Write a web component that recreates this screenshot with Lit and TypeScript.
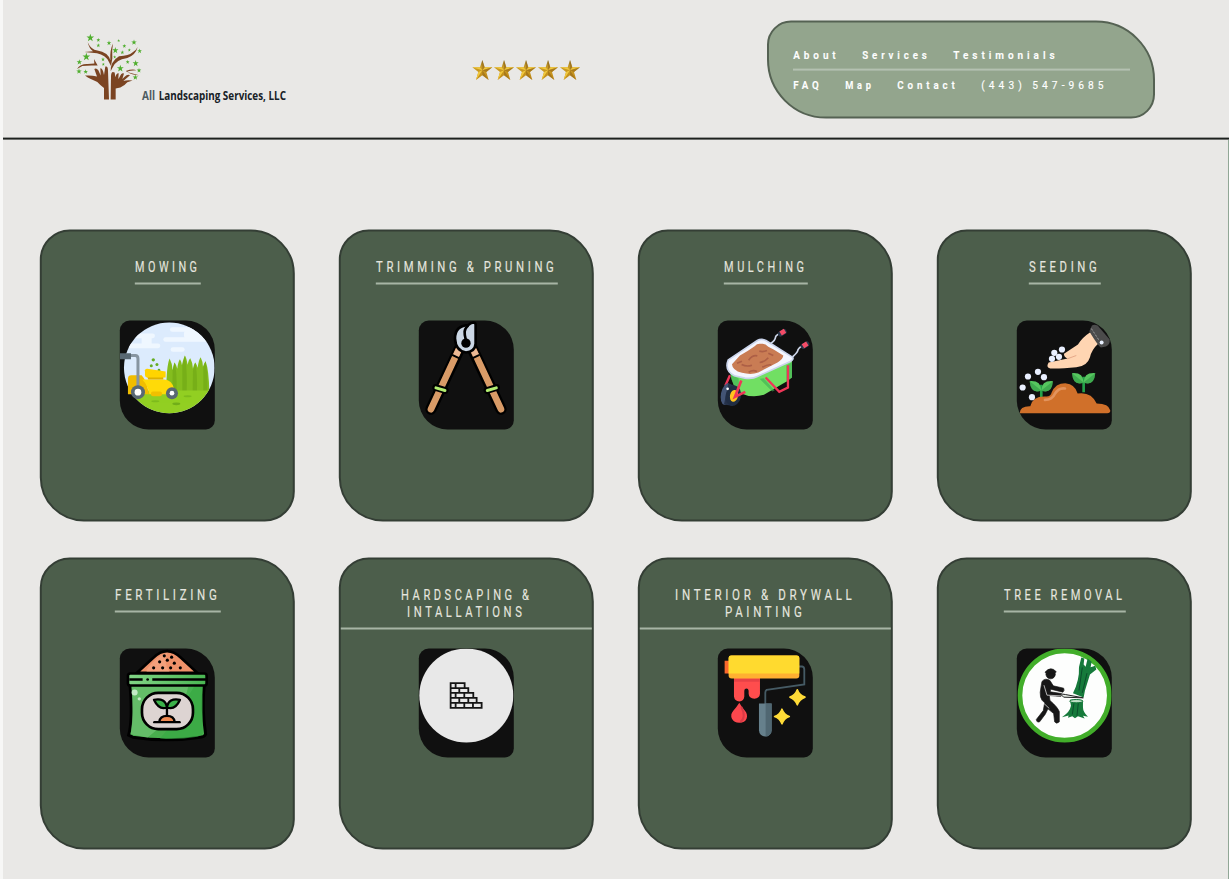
import { LitElement, html, svg, css } from "lit";
import { customElement, property } from "lit/decorators.js";

const STAR = "0,-31 7,-9 30,-9 12,5 19,29 0,15 -19,29 -12,5 -30,-9 -7,-9";

/** Letter-spaced condensed caption stretched to an exact width. */
@customElement("fit-text")
class FitText extends LitElement {
  static properties = { text: {}, width: { type: Number }, size: { type: Number }, spacing: { type: Number }, line: { type: Number } };
  text = "";
  width = 60;
  size = 15;
  spacing = 4.8;
  line = 17;
  static styles = css`
    :host { display: block; }
    svg { display: block; overflow: visible; }
    text { fill: currentColor; stroke: currentColor; stroke-width: 0.15px; font-family: Roboto, "Open Sans", sans-serif; }
  `;
  render() {
    return html`<svg width=${this.width} height=${this.line}>
      <text x="0.3" y=${this.line - 4} font-size=${this.size} letter-spacing=${this.spacing}
        textLength=${this.width - 0.7} lengthAdjust="spacingAndGlyphs">${this.text}</text></svg>`;
  }
}

const mower = svg`<svg viewBox="45 31 284 327">
  <defs><clipPath id="c"><circle cx="193" cy="173" r="136"/></clipPath></defs>
  <g clip-path="url(#c)">
    <rect x="45" y="31" width="290" height="290" fill="#dcebfd"/>
    <g fill="#eff7ff"><rect x="195" y="51" width="75" height="14" rx="7"/><rect x="237" y="62" width="60" height="22" rx="8"/><rect x="175" y="81" width="155" height="14" rx="7"/><rect x="70" y="70" width="80" height="14" rx="7"/><rect x="110" y="80" width="30" height="22"/><rect x="60" y="100" width="106" height="14" rx="7"/><rect x="197" y="111" width="42" height="14" rx="7"/></g>
    <path fill="#84bd1e" d="M184 245Q184 168 194 145Q202 160 203 180Q206 162 209 157Q215 165 217 176Q219 155 225 147Q230 155 231 165Q235 145 240 136Q246 146 248 164Q251 148 256 144Q263 156 264 176Q267 161 271 157Q276 164 278 173Q281 149 287 141Q294 154 294 170Q298 156 302 153Q312 180 313 245Z"/>
    <path fill="#73ab17" d="M203 180Q208 160 209 157Q216 180 215 245H202ZM232 165L240 136Q248 190 245 245H232ZM264 180L271 157Q278 190 276 245H263ZM295 170L302 153Q309 190 307 245H295Z" opacity=".75"/>
    <rect x="45" y="241" width="290" height="80" fill="#92cf22"/>
    <g fill="#71ae19"><ellipse cx="214" cy="281" rx="12" ry="4"/><g opacity=".6"><ellipse cx="151" cy="273" rx="12" ry="3"/><ellipse cx="248" cy="258" rx="12" ry="3"/></g></g>
  </g>
  <g fill="#66ad22"><circle cx="145" cy="149" r="5"/><circle cx="156" cy="163" r="4.5"/><circle cx="139" cy="167" r="4.5"/><circle cx="162" cy="180" r="4"/></g>
  <path fill="#f1bd00" d="M69 252V205Q69 195 79 195H110Q125 210 132 252Z"/>
  <path fill="#ffda08" d="M112 208H178Q201 210 207 235V252H133Q129 226 112 208Z"/>
  <path fill="#ddb000" d="M126 198H175V208H130Z"/><path fill="#ffd400" d="M120 180Q121 176 127 176L182 184V202H127Q120 202 120 193Z"/><rect x="138" y="244" width="33" height="14" rx="6" fill="#f0c000"/>
  <path d="M73 136H91Q99 136 99 146V230" fill="none" stroke="#8795a1" stroke-width="9"/><path fill="#596873" d="M45 129H78V147H45Z"/>
  <circle cx="99" cy="246" r="21" fill="#596873"/><circle cx="99" cy="246" r="10" fill="#fff"/><circle cx="201" cy="249" r="18" fill="#596873"/><circle cx="201" cy="249" r="7" fill="#fff"/></svg>`;

const shears = svg`<svg viewBox="42 31 284 327">
  <g stroke-linecap="round" fill="none"><path d="M164 115L78 297M202 115L288 297" stroke="#000" stroke-width="34"/><path d="M162 117L78 297M204 117L288 297" stroke="#d99b67" stroke-width="20"/><path d="M162 117L153 137M204 117L214 137" stroke="#edb994" stroke-width="18" stroke-linecap="butt"/>
  <path d="M143 135L162 144M203 144L222 135" stroke="#000" stroke-width="6"/><path d="M92 232L121 241M275 232L246 241" stroke="#000" stroke-width="20"/><path d="M93 233L120 241M274 233L247 241" stroke="#b2ed70" stroke-width="9"/></g>
  <path d="M189 45Q150 47 150 85Q152 122 183 127Q210 124 212 101V44Q212 37 205 37Q197 38 189 45Z" fill="#cbd7e5" stroke="#000" stroke-width="8"/><path d="M190 45C176 57 177 70 183 91" fill="none" stroke="#000" stroke-width="8"/><circle cx="183" cy="99" r="14"/></svg>`;

const barrow = svg`<svg viewBox="40 31 284 327">
  <g fill="none" stroke-linecap="round"><path d="M199 99Q211 92 213 80Q215 74 231 68M265 139Q280 126 280 119Q283 111 298 106" stroke="#cdd5e8" stroke-width="5"/><path d="M228 71L238 65M296 108L306 102" stroke="#29364a" stroke-width="16"/><path d="M228 70L241 62M295 108L308 100" stroke="#f34c67" stroke-width="14" stroke-linecap="butt"/></g>
  <path fill="#71df63" d="M77 189Q84 232 107 249Q140 264 178 254L247 213L262 202V143Z"/><path fill="#3cae53" d="M77 193L102 205L104 245Q84 229 77 193ZM177 204L210 241L203 244L165 206ZM245 167L262 156V202L245 213Z" opacity=".6"/>
  <path d="M71 149L158 91Q170 84 184 91L262 140Q270 146 257 154L158 199Q145 207 121 204L89 197Q58 180 71 149Z" fill="#f4f6ff" stroke="#cbd5ec" stroke-width="5"/>
  <path fill="#c97c54" d="M82 162L106 136Q129 123 150 108Q158 99 169 101Q181 98 191 110L207 118L236 136Q235 147 220 156L161 187Q140 195 112 188Q83 180 82 162Z"/>
  <path d="M132 150Q143 134 158 137M164 123Q176 126 187 121M111 163Q126 171 142 165M165 157Q181 155 191 143M191 129L206 136M132 186Q145 178 157 184M173 171Q189 162 200 164M97 159L112 153" fill="none" stroke="#ad5f46" stroke-width="5"/>
  <path d="M76 195L62 227M183 202L224 245L250 232V165" fill="none" stroke="#ef3658" stroke-width="7"/>
  <ellipse cx="66" cy="252" rx="17" ry="33" transform="rotate(12 66 252)" fill="#435475"/><path d="M71 220L96 228L82 287L58 283Z" fill="#26324a"/><ellipse cx="86" cy="257" rx="23" ry="31" transform="rotate(12 86 257)" fill="#202d43"/><ellipse cx="88" cy="257" rx="12" ry="18" transform="rotate(12 88 257)" fill="#ffc31d"/><circle cx="69" cy="236" r="4" fill="#fff"/>
  <path d="M110 211L91 260L122 245" fill="none" stroke="#ef3658" stroke-width="8"/></svg>`;

const sprout = (x: number, y: number) => svg`<g transform="translate(${x} ${y})"><path d="M0 5V51" stroke="#24a34a" stroke-width="8"/><path fill="#56c65f" d="M0 22Q-31 34 -35-6Q-1-9 0 22Q1-9 35-6Q31 34 0 22Z"/><path fill="#27903f" d="M0 22Q-31 34 -35-6L0 22L35-6Q31 34 0 22Z" opacity=".5"/></g>`;
const seeding = svg`<svg viewBox="36 31 284 327">${sprout(109, 219)}${sprout(236, 195)}
  <path fill="#d0702a" d="M44 309Q45 287 76 288Q83 256 125 259Q137 259 140 247Q151 219 181 219Q211 222 218 250Q259 244 275 280Q312 280 316 301Q316 309 307 309Z"/><path d="M120 269Q142 268 149 252Q161 232 180 235" fill="none" stroke="#e2935d" stroke-width="8" stroke-linecap="round"/>
  <path fill="#ffd5b2" d="M256 66Q231 82 219 103L177 131Q177 142 188 145L131 157Q122 172 136 175Q168 176 214 171Q247 168 255 141Q260 119 280 100Z"/><path d="M187 146L214 136" stroke="#e6a989" stroke-width="3"/>
  <path fill="#4b4b4b" d="M253 63L261 46Q268 41 278 46L314 88Q316 103 303 109L288 112Q280 108 253 63Z"/><path d="M259 55L282 90" stroke="#999" stroke-width="3" stroke-dasharray="7 4"/><circle cx="290" cy="97" r="6" fill="#e8f0ff"/>
  <g fill="#e9efff">${[[148, 128], [171, 118], [162, 140], [141, 146], [99, 185], [69, 199], [117, 201], [53, 232], [81, 261]].map(([x, y]) => svg`<circle cx=${x} cy=${y} r="9.3"/>`)}</g></svg>`;

const fertilizer = svg`<svg viewBox="45 27 284 327"><defs><linearGradient id="g"><stop stop-color="#82d586"/><stop offset="1" stop-color="#49b652"/></linearGradient></defs>
  <path d="M96 100L145 55Q186 15 228 55L277 100Z" fill="#ef9169" stroke="#000" stroke-width="8"/><path d="M125 90Q157 48 187 40Q173 69 194 97H125Z" fill="#f8af90" opacity=".5"/><g>${[[178, 49], [200, 53], [164, 67], [187, 62], [208, 71], [146, 85], [173, 85], [197, 85], [226, 85]].map(([x, y]) => svg`<circle cx=${x} cy=${y} r="4.7"/>`)}</g>
  <path d="M75 135H298Q290 207 302 284Q299 292 286 293Q186 309 83 293L71 287Q84 240 75 135Z" fill="#48ad4d" stroke="#000" stroke-width="9"/><path d="M79 140H268Q228 213 128 294L77 284Q87 220 79 140Z" fill="#7ccb80" opacity=".55"/><path d="M250 141H293V284L278 292Q215 302 165 297Q231 225 250 141Z" fill="#36ab42" opacity=".65"/>
  <rect x="69" y="102" width="236" height="36" rx="7" fill="url(#g)" stroke="#000" stroke-width="8"/><path d="M73 120H113M142 120H303" stroke="#000" stroke-width="7"/><circle cx="128" cy="120" r="4"/>
  <circle cx="89" cy="159" r="9" fill="#c4ecc7"/><circle cx="103" cy="178" r="5" fill="#c4ecc7"/><rect x="111" y="160" width="153" height="109" rx="49" fill="#ddd4d2" stroke="#000" stroke-width="8"/>
  <g fill="#3bb14a" stroke="#000" stroke-width="7" stroke-linejoin="round"><path d="M186 204Q162 213 147 181Q181 174 186 204Q191 174 225 181Q211 213 186 204V229"/><path d="M163 247Q165 229 186 229Q207 229 209 247" fill="#ef8951"/><path d="M148 248H224" stroke-linecap="round"/></g></svg>`;

const bricks = svg`<svg viewBox="42 27 284 327"><circle cx="184" cy="168" r="141" fill="#e8e8e8"/>
  <path d="M137 131H179V146H190V160H205V175H215V190H230V205H137ZM137 146H179M137 160H190M137 175H205M137 190H215M152 131V146M163 146V160M152 160V175M178 160V175M163 175V190M190 175V190M152 190V205M178 190V205M204 190V205" stroke="#151515" stroke-width="5.4" fill="none"/></svg>`;

const roller = svg`<svg viewBox="40 27 284 327"><path fill="#fa682d" d="M60 64H76V102H60Z"/><path d="M282 81H293Q299 82 299 91V135L186 151Q182 153 182 160V195" fill="none" stroke="#455a64" stroke-width="5.5"/>
  <path fill="#ff4d4d" d="M88 112H166V163Q165 177 149 178Q133 177 132 163V154Q131 147 126 147Q119 147 119 154V171Q118 184 104 186Q90 185 88 171Z"/><path fill="#d93b43" d="M88 117H165V127H88Z" opacity=".6"/><rect x="72" y="48" width="212" height="69" rx="9" fill="#ffb031"/><path fill="#ffda2f" d="M72 55Q72 48 79 48H277Q284 48 284 55V102H72Z"/>
  <path fill="#fb474d" d="M104 190Q96 203 86 214Q76 225 82 238Q88 250 104 250Q121 250 126 237Q130 225 121 214Q112 204 104 190Z"/><path d="M110 202Q126 234 107 247" fill="none" stroke="#d93b46" stroke-width="6"/>
  <path fill="#66808c" d="M163 192H201V272A19 19 0 0 1 163 272Z"/><path fill="#506772" d="M183 192H201V272A19 19 0 0 1 183 291Z"/>
  <path fill="#ffdb37" stroke="#ffdb37" stroke-width="5" stroke-linejoin="round" d="M232 209Q238 226 254 231Q238 236 232 253Q226 236 210 231Q226 226 232 209ZM278 151Q284 168 301 173Q284 179 278 196Q272 179 256 173Q272 168 278 151Z"/></svg>`;

const logger = svg`<svg viewBox="36 27 284 327"><circle cx="179" cy="168" r="134" fill="#fdfefd" stroke="#42ae2a" stroke-width="14"/>
  <g fill="#171717" stroke="#171717" stroke-width="2"><circle cx="137" cy="104" r="14"/><path d="M120 98Q138 78 154 97L150 100H122Z"/><path d="M111 126Q121 114 135 123L145 139L176 146Q180 153 174 158L137 149L136 157L169 162L168 171L133 168L135 183Q158 203 163 216V247Q155 255 149 247L146 222L129 208L121 224L104 247Q95 250 94 240L115 213L119 190Q100 177 108 143Z"/></g>
  <path d="M116 191L133 207M117 137L126 167L168 169" stroke="#fff" stroke-width="2" fill="none"/><path d="M166 163L181 165L235 175L176 173Z" fill="#e8eee9" stroke="#222" stroke-width="3"/>
  <path fill="#167a3b" d="M229 54L238 57L236 75L242 82L248 57L260 67L257 83L271 79L274 90L255 105L240 153L236 174L204 161Q224 121 222 83ZM195 181Q215 178 234 184V204Q234 217 249 232L234 229L239 237L219 230L210 236L202 230L189 235L191 228L171 233Q195 218 198 199Z"/><path d="M232 84L222 153M246 101L232 160M207 191L202 225M220 191L216 229" stroke="#0b4d2b" stroke-width="3"/><ellipse cx="214" cy="185" rx="20" ry="5" fill="#bddec4" stroke="#15753a" stroke-width="3"/></svg>`;

interface Service { lines: [string, number][]; icon: unknown; }
const services: Service[] = [
  { lines: [["MOWING", 66]], icon: mower },
  { lines: [["TRIMMING & PRUNING", 182]], icon: shears },
  { lines: [["MULCHING", 84]], icon: barrow },
  { lines: [["SEEDING", 72]], icon: seeding },
  { lines: [["FERTILIZING", 106]], icon: fertilizer },
  { lines: [["HARDSCAPING &", 132], ["INTALLATIONS", 119]], icon: bricks },
  { lines: [["INTERIOR & DRYWALL", 181], ["PAINTING", 81]], icon: roller },
  { lines: [["TREE REMOVAL", 122]], icon: logger },
];

@customElement("service-card")
class ServiceCard extends LitElement {
  @property({ attribute: false }) service!: Service;
  static styles = css`
    :host { display: flex; flex-direction: column; align-items: center; box-sizing: border-box; width: 255px; height: 292px; border: 2px solid #343e35; border-radius: 30px 44px 30px 44px; background: #4c5e4b; transform: translate(-0.2px, -0.5px); }
    .head { height: 89px; width: 100%; box-sizing: border-box; padding-top: 27px; display: flex; flex-direction: column; align-items: center; color: #e5e5df; }
    .title { display: flex; flex-direction: column; align-items: center; padding-bottom: 7px; border-bottom: 2px solid #a7b5a5; }
    .wide { align-self: stretch; }
    .icon { width: 95px; height: 109px; overflow: hidden; background: #101010; border-radius: 10px 29px 9px 29px; }
    .icon svg { display: block; width: 100%; height: 100%; }
  `;
  render() {
    const { lines, icon } = this.service;
    return html`<div class="head"><div class="title ${lines.length > 1 ? "wide" : ""}">
      ${lines.map(([t, w]) => html`<fit-text .text=${t} .width=${w}></fit-text>`)}</div></div><div class="icon">${icon}</div>`;
  }
}

const leaves: [number, number, number][] = [[91, 39, 10], [115, 46, 5], [115, 62, 5], [147, 55, 6], [176, 48, 4], [193, 64, 5], [222, 53, 7], [166, 77, 8], [187, 83, 5], [208, 76, 4], [239, 79, 6], [79, 96, 10], [58, 112, 7], [129, 104, 5], [130, 119, 4], [164, 97, 4], [203, 112, 5], [227, 116, 8], [181, 131, 9], [237, 137, 6], [57, 140, 7], [77, 141, 6], [226, 158, 7]];

@customElement("app-root")
export class AppRoot extends LitElement {
  static styles = css`
    :host { display: block; box-sizing: border-box; width: 1229px; height: 879px; overflow: hidden; background: #e9e8e6; border-left: 3px solid #f7f7f6; }
    header { display: flex; align-items: flex-start; box-sizing: border-box; height: 140px; border-bottom: 2px solid #1d211e; transform: translateY(-0.4px); }
    .logo { width: 240px; height: 85px; margin: 25px 0 0 57px; overflow: visible; }
    .stars { width: 135px; height: 40px; margin: 50px 0 0 160px; }
    nav { box-sizing: border-box; width: 388px; height: 98px; margin: 21px 0 0 172px; padding: 24px 23px 0 24px; background: #93a58d; border: 2px solid #556253; border-radius: 24px 59px 24px 59px; color: #fff; }
    .row { display: flex; height: 22px; gap: 22px; }
    .row + .row { border-top: 2px solid #b4c1b1; padding-top: 6px; }
    .medium { font-weight: 600; }
    main { box-sizing: border-box; height: 739px; border-right: 1px solid #91a796; padding: 90px 0 0 37px; display: grid; grid-template-columns: repeat(4, 255px); grid-auto-rows: 291px; gap: 37.4px 44px; align-content: start; }
    .brand { font: 700 38px "Open Sans", sans-serif; }
  `;
  item(t: string, w: number) {
    return html`<fit-text class=${t[0] === "(" ? "phone" : "medium"} .text=${t} .width=${w} .size=${11.6} .spacing=${4.6} .line=${16}></fit-text>`;
  }
  render() {
    return html`<header>
      <svg class="logo" viewBox="0 0 720 255"><g fill="#7b4422">
        <path d="M75 153Q93 151 111 156L103 133Q109 129 115 137L122 153L121 131Q128 129 132 151L136 126Q144 123 144 139L147 225H132V190Q122 183 112 172Q88 163 75 153ZM218 168Q202 166 190 169L210 152Q203 148 193 157L187 163L192 147Q185 142 178 159L175 163L176 146Q169 145 166 158L164 144Q154 137 153 154L152 225H167V192L181 189Q193 184 202 173Z"/>
        <path d="M83 53Q93 75 112 78Q144 83 151 107Q149 77 159 57Q155 76 157 102L153 124L146 111Q137 91 111 86L73 82L99 80Q88 73 83 53ZM152 140Q151 111 177 95Q207 94 217 84Q228 78 233 67Q227 91 202 100Q166 105 157 130ZM51 133Q61 117 83 118L103 117L102 103L113 123Q83 122 67 124ZM197 139Q219 132 229 137Q208 138 201 142L237 152Q217 152 197 139Z"/></g>
        <g fill="#4fae2d">${leaves.map(([x, y, r]) => svg`<polygon points=${STAR} transform="translate(${x} ${y}) scale(${r / 26})"/>`)}</g>
        <text class="brand" fill="#4d5b61" x="246" y="226" textLength="39" lengthAdjust="spacingAndGlyphs">All</text>
        <text class="brand" fill="#172126" x="296" y="226" textLength="382" lengthAdjust="spacingAndGlyphs">Landscaping Services, LLC</text>
      </svg>
      <svg class="stars" viewBox="0 0 405 120"><defs><linearGradient id="gold" x2="0" y2="1"><stop stop-color="#89691e"/><stop offset=".35" stop-color="#c99c26"/><stop offset="1" stop-color="#c38c16"/></linearGradient></defs>
        ${[67, 132, 198, 264, 330].map(x => svg`<g transform="translate(${x} 62)"><polygon points=${STAR} fill="url(#gold)"/><path fill="#f0c83e" d="M-30-9L-7-9L0 0ZM0 0L7-9L30-9ZM-12 5L0 0L-19 29Z"/><path fill="#94671a" d="M0-31V0L7-9ZM0 0L30-9L12 5ZM0 0L19 29L0 15Z" opacity=".6"/></g>`)}</svg>
      <nav><div class="row">${this.item("About", 47)}${this.item("Services", 69)}${this.item("Testimonials", 106)}</div>
        <div class="row">${this.item("FAQ", 30)}${this.item("Map", 30)}${this.item("Contact", 62)}${this.item("(443) 547-9685", 127)}</div></nav>
      </header><main>${services.map(s => html`<service-card .service=${s}></service-card>`)}</main>`;
  }
}
